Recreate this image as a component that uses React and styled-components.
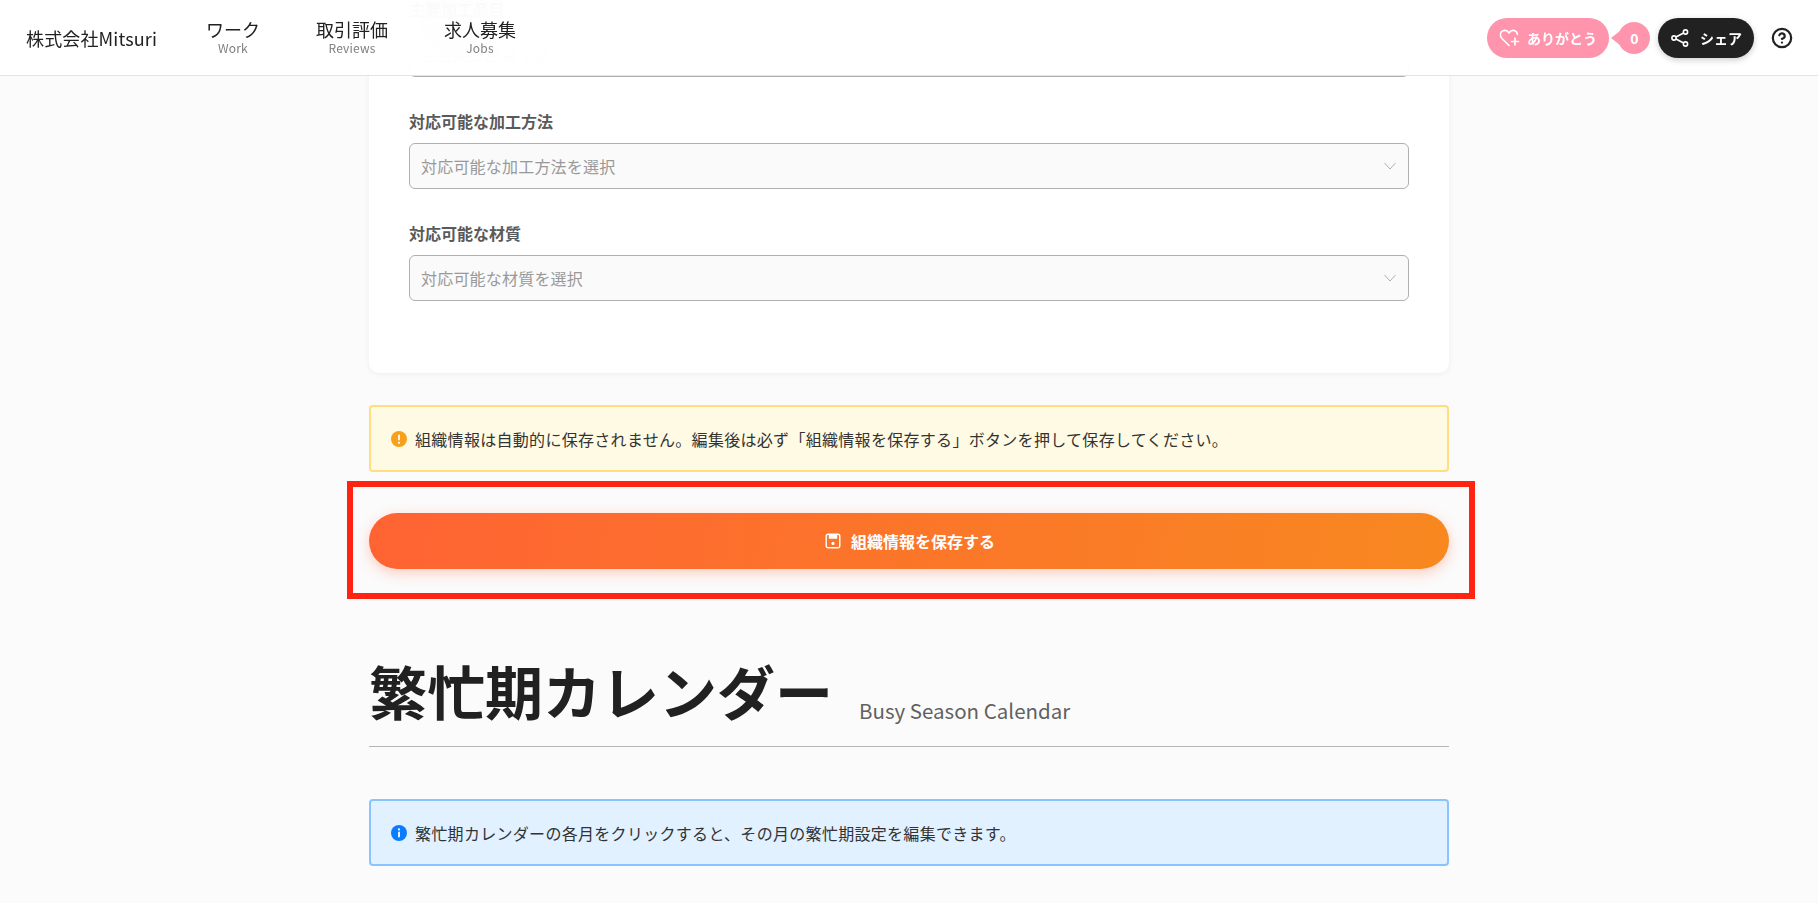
import React from 'react';
import styled, { createGlobalStyle } from 'styled-components';
import { LuCircleHelp } from 'react-icons/lu';

const FONT = `"Noto Sans CJK JP", "Noto Sans", sans-serif`;

const GlobalStyle = createGlobalStyle`
  html, body {
    margin: 0;
    padding: 0;
    height: 100%;
    overflow: hidden;
    background: #fbfbfb;
    font-family: ${FONT};
    color: #212121;
  }
  * { box-sizing: border-box; }
`;

const Header = styled.header`
  position: fixed;
  top: 0;
  left: 0;
  right: 0;
  z-index: 10;
  height: 76px;
  display: flex;
  align-items: center;
  padding: 0 25px 0 26px;
  background: rgba(255, 255, 255, 0.94);
  backdrop-filter: blur(24px);
  border-bottom: 1px solid #e3e3e3;
`;

const Brand = styled.div`
  font-size: 18px;
  letter-spacing: 0.15px;
  line-height: 1;
  width: 180px;
`;

const Nav = styled.nav`
  display: flex;
  gap: 56px;
  margin-top: -2px;
`;

const NavItem = styled.div`
  display: flex;
  flex-direction: column;
  align-items: center;
  font-size: 18px;
  line-height: 21px;
  small {
    margin-top: 1px;
    font-size: 12px;
    line-height: 14px;
    letter-spacing: 0.2px;
    color: #808080;
  }
`;

const Actions = styled.div`
  margin-left: auto;
  display: flex;
  align-items: center;
`;

const ThanksButton = styled.div`
  height: 40px;
  width: 122px;
  border-radius: 20px;
  background: #ff94ad;
  color: #fff;
  display: flex;
  align-items: center;
  justify-content: center;
  gap: 6px;
  font-size: 14px;
  font-weight: 700;
`;

const Count = styled.div`
  position: relative;
  margin-left: 9px;
  width: 32px;
  height: 32px;
  padding-left: 1px;
  border-radius: 50%;
  background: #ff94ad;
  color: #fff;
  display: flex;
  align-items: center;
  justify-content: center;
  font-size: 14px;
  font-weight: 700;
  &::before {
    content: '';
    position: absolute;
    left: -7px;
    top: 9px;
    border-style: solid;
    border-width: 7px 9px 7px 0;
    border-color: transparent #ff94ad transparent transparent;
  }
`;

const ShareButton = styled.div`
  margin-left: 8px;
  height: 40px;
  width: 96px;
  border-radius: 20px;
  background: #212121;
  color: #fff;
  display: flex;
  align-items: center;
  justify-content: center;
  gap: 10px;
  font-size: 14px;
  font-weight: 700;
  box-shadow: 0 2px 6px rgba(0, 0, 0, 0.2);
`;

const HelpIcon = styled.div`
  margin-left: 17px;
  display: flex;
  color: #212121;
`;

const Main = styled.main`
  width: 1080px;
  margin: -2px auto 0;
  position: relative;
`;

const Card = styled.section`
  background: #fff;
  border-radius: 0 0 10px 10px;
  box-shadow: 0 1px 6px rgba(0, 0, 0, 0.06);
  padding: 0 40px 72px;
  display: flex;
  flex-direction: column;
  gap: 33px;
`;

const Field = styled.div`
  display: flex;
  flex-direction: column;
  gap: 11px;
`;

const FieldLabel = styled.label`
  font-size: 16px;
  line-height: 22px;
  font-weight: 700;
  color: #5a5a5a;
`;

const Select = styled.div`
  height: 46px;
  border: 1px solid #b0b0b0;
  border-radius: 6px;
  background: #fafafa;
  display: flex;
  align-items: center;
  justify-content: space-between;
  padding: 0 11px;
  font-size: 16px;
  letter-spacing: 0.2px;
  color: #999;
`;

const Alert = styled.div`
  height: 67px;
  margin-top: ${(p) => p.$top}px;
  border: 2px solid ${(p) => p.$border};
  background: ${(p) => p.$bg};
  border-radius: 4px;
  display: flex;
  align-items: center;
  gap: 8px;
  padding: 0 20px;
  font-size: 16px;
  letter-spacing: 0.3px;
  color: #333;
`;

const SaveWrap = styled.div`
  position: relative;
`;

const SaveButton = styled.div`
  height: 56px;
  margin-top: 41px;
  border-radius: 28px;
  background: linear-gradient(100deg, #ff6333, #f88820);
  box-shadow: 0 4px 14px rgba(255, 99, 51, 0.3);
  color: #fff;
  display: flex;
  align-items: center;
  justify-content: center;
  gap: 10px;
  padding-left: 2px;
  font-size: 16px;
  font-weight: 700;
`;

const Highlight = styled.div`
  position: absolute;
  left: -22px;
  right: -26px;
  top: -32px;
  bottom: -30px;
  border: 6px solid #ff2412;
  pointer-events: none;
`;

const SectionTitle = styled.div`
  margin-top: 90px;
  height: 88px;
  display: flex;
  align-items: flex-end;
  gap: 26px;
  border-bottom: 1px solid #b5b5b5;
  padding-bottom: 22px;
  h2 {
    margin: 0;
    font-size: 58px;
    line-height: 68px;
    font-weight: 700;
    color: #212121;
  }
  span {
    font-size: 20.5px;
    line-height: 28px;
    color: #616161;
  }
`;

// the first one sits behind the translucent header, only its blur shows
const fields = [
  { label: '主要加工品目', placeholder: '主要加工品目を選択' },
  { label: '対応可能な加工方法', placeholder: '対応可能な加工方法を選択' },
  { label: '対応可能な材質', placeholder: '対応可能な材質を選択' },
];

const Chevron = () => (
  <svg width="14" height="14" viewBox="0 0 14 14" fill="none" stroke="#b0b0b0" strokeWidth="1">
    <path d="M1.5 4 L7 10 L12.5 4" />
  </svg>
);

const HeartPlus = () => (
  <svg width="22" height="20" viewBox="0 0 22 20" fill="none" stroke="#fff" strokeWidth="1.6" strokeLinecap="round" strokeLinejoin="round">
    <path d="M10 17.5 L3 10.5 C0.5 8 1 4 4 2.8 C6.3 1.9 8.7 2.8 10 5 C11.3 2.8 13.7 1.9 16 2.8 C17.6 3.5 18.4 5 18.5 6.5" />
    <path d="M16 10 V17 M12.5 13.5 H19.5" />
  </svg>
);

const ShareIcon = () => (
  <svg width="20" height="20" viewBox="0 0 20 20" fill="none" stroke="#fff" strokeWidth="1.6">
    <circle cx="15.5" cy="4" r="2.1" />
    <circle cx="4" cy="10" r="2.1" />
    <circle cx="15.5" cy="16" r="2.1" />
    <path d="M6 9 L13.6 5 M6 11 L13.6 15" />
  </svg>
);

const SaveIcon = () => (
  <svg width="16" height="16" viewBox="0 0 16 16" fill="none" stroke="#fff" strokeWidth="1.4">
    <rect x="1.2" y="1.2" width="13.6" height="13.6" rx="2" />
    <path d="M4.5 1.5 V5 H11.5 V1.5" fill="#fff" />
    <circle cx="8" cy="10.4" r="1.6" fill="#fff" stroke="none" />
  </svg>
);

const DotIcon = ({ color, children }) => (
  <svg width="16" height="16" viewBox="0 0 16 16">
    <circle cx="8" cy="8" r="8" fill={color} />
    {children}
  </svg>
);

const App = () => (
  <>
    <GlobalStyle />
    <Header>
      <Brand>株式会社Mitsuri</Brand>
      <Nav>
        <NavItem>ワーク<small>Work</small></NavItem>
        <NavItem>取引評価<small>Reviews</small></NavItem>
        <NavItem>求人募集<small>Jobs</small></NavItem>
      </Nav>
      <Actions>
        <ThanksButton><HeartPlus />ありがとう</ThanksButton>
        <Count>0</Count>
        <ShareButton><ShareIcon />シェア</ShareButton>
        <HelpIcon><LuCircleHelp size={22} strokeWidth={2.4} /></HelpIcon>
      </Actions>
    </Header>
    <Main>
      <Card>
        {fields.map((f) => (
          <Field key={f.label}>
            <FieldLabel>{f.label}</FieldLabel>
            <Select>{f.placeholder}<Chevron /></Select>
          </Field>
        ))}
      </Card>
      <Alert $top={32} $border="#ffdd80" $bg="#fffae3">
        <DotIcon color="#f9a01b">
          <rect x="7.1" y="3.5" width="1.8" height="6" rx="0.9" fill="#fff" />
          <circle cx="8" cy="11.8" r="1.1" fill="#fff" />
        </DotIcon>
        組織情報は自動的に保存されません。編集後は必ず「組織情報を保存する」ボタンを押して保存してください。
      </Alert>
      <SaveWrap>
        <SaveButton><SaveIcon />組織情報を保存する</SaveButton>
        <Highlight />
      </SaveWrap>
      <SectionTitle>
        <h2>繁忙期カレンダー</h2>
        <span>Busy Season Calendar</span>
      </SectionTitle>
      <Alert $top={52} $border="#8ac4ff" $bg="#e1f1ff">
        <DotIcon color="#0a7cff">
          <circle cx="8" cy="4.4" r="1.1" fill="#fff" />
          <rect x="7.1" y="6.5" width="1.8" height="6" rx="0.9" fill="#fff" />
        </DotIcon>
        繁忙期カレンダーの各月をクリックすると、その月の繁忙期設定を編集できます。
      </Alert>
    </Main>
  </>
);

export default App;
